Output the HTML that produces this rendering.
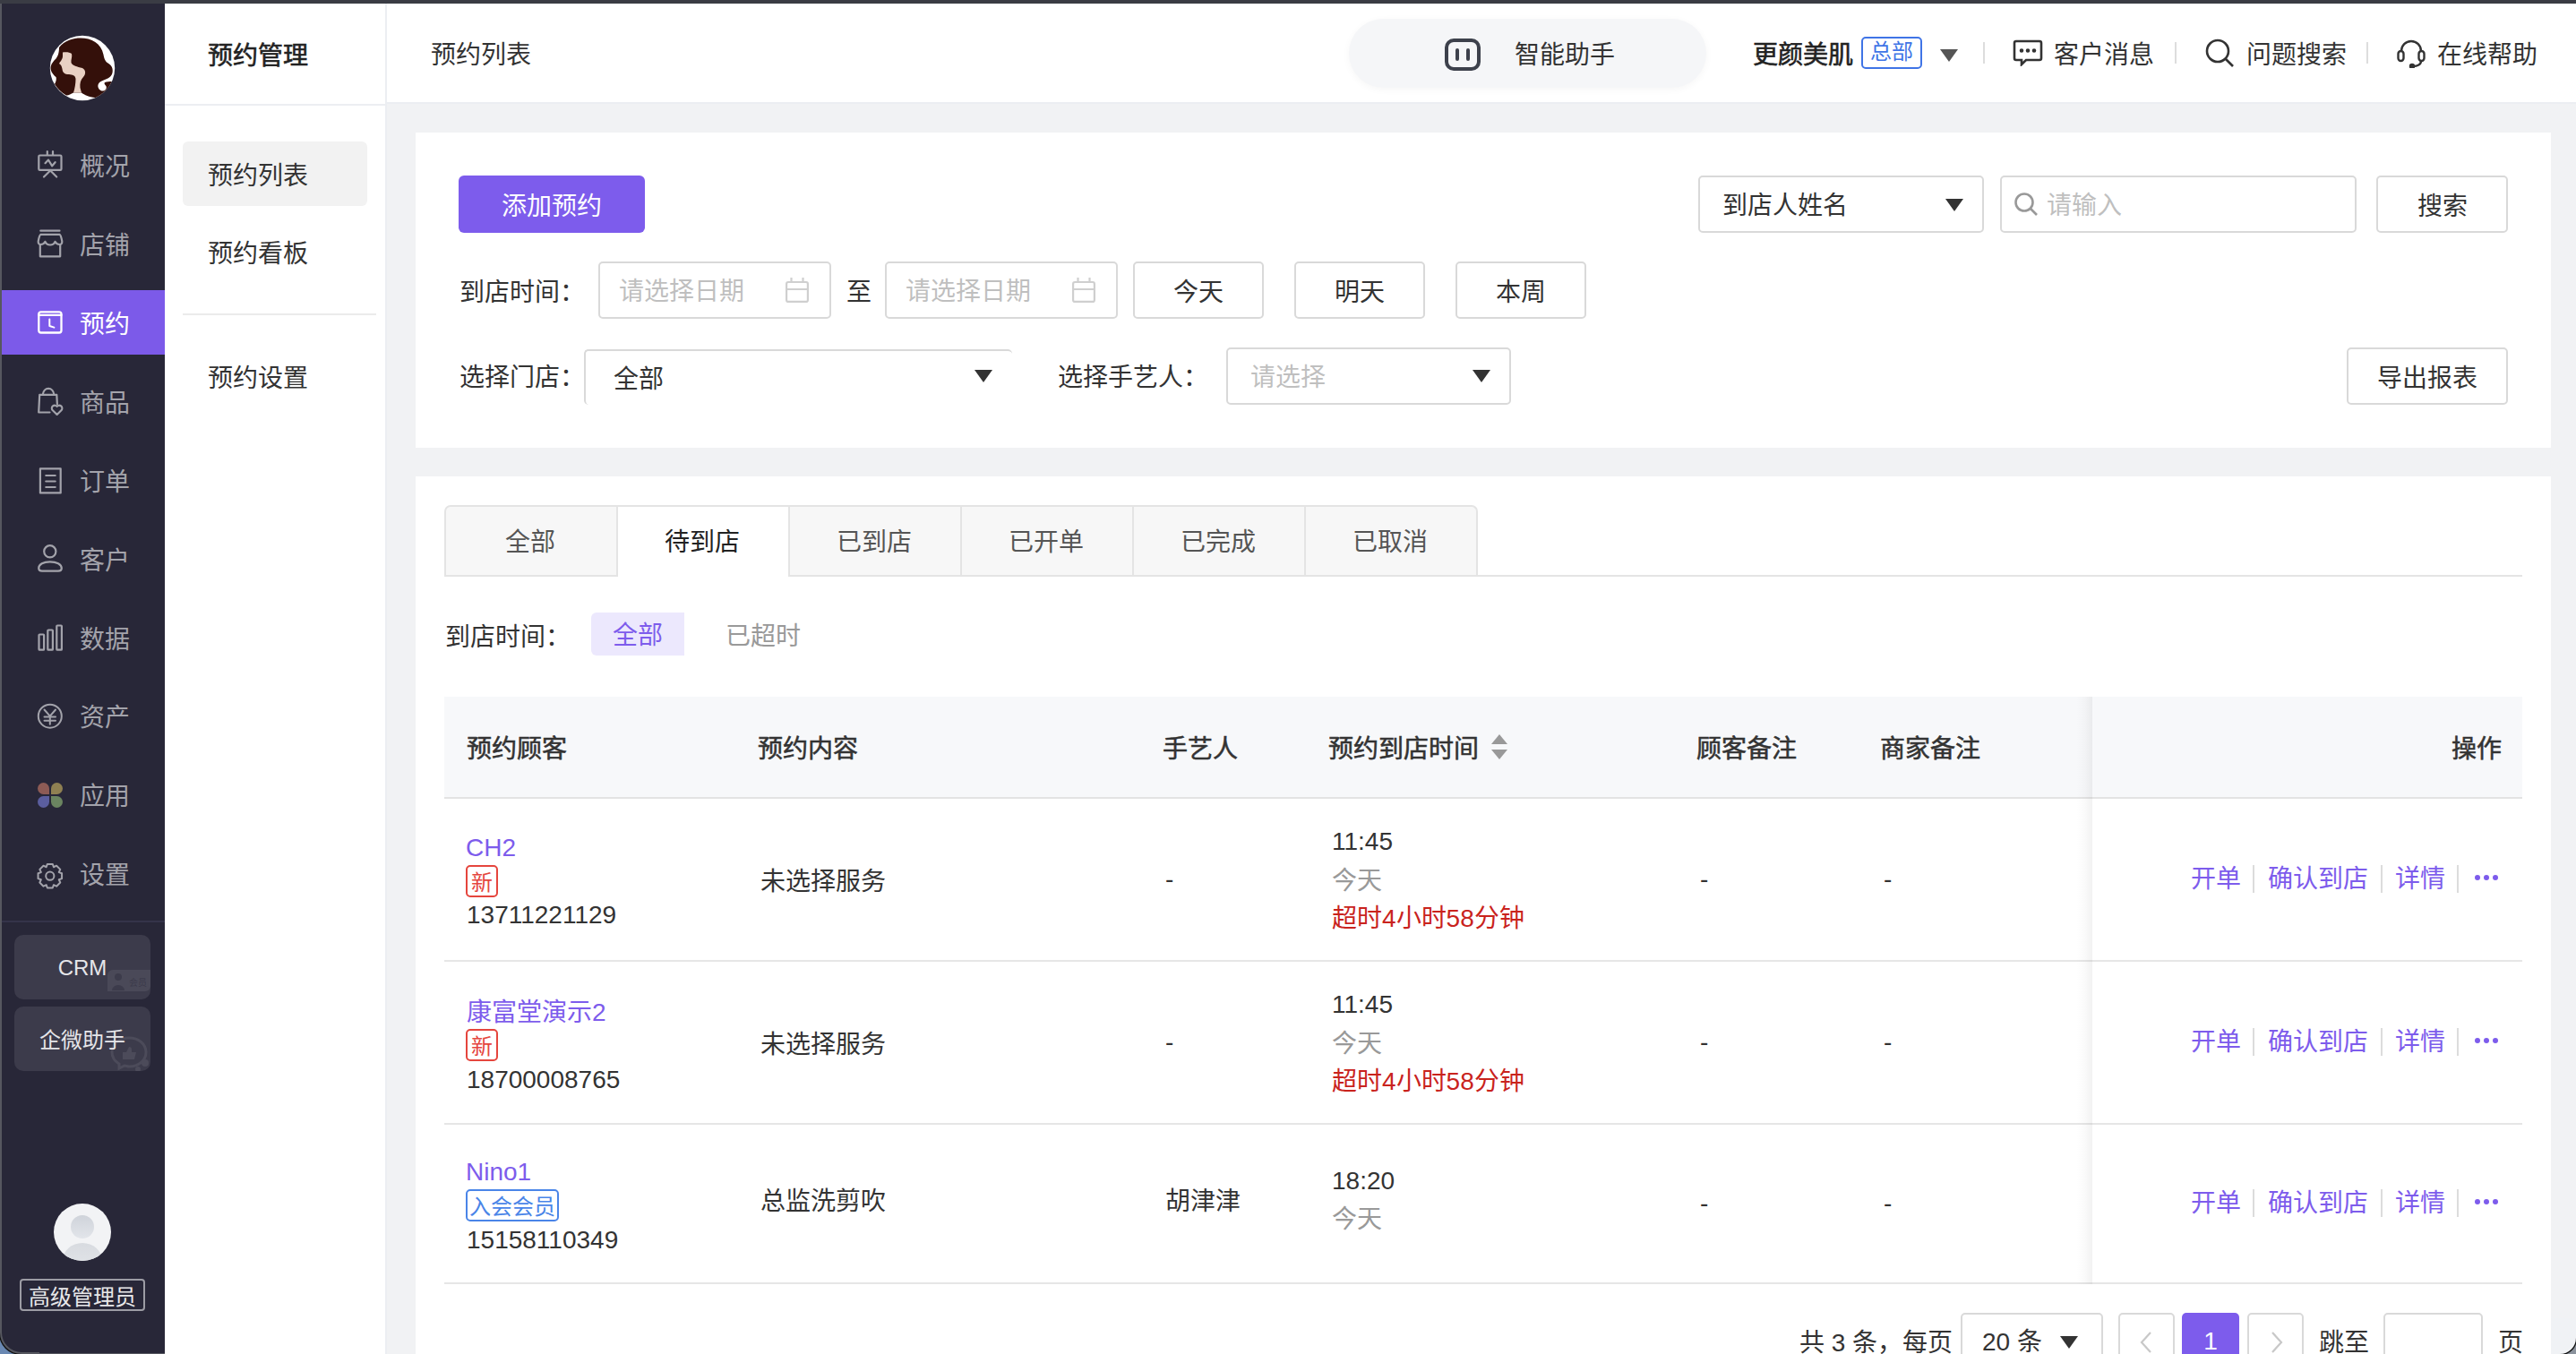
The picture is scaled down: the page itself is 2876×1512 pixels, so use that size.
<!DOCTYPE html>
<html lang="zh-CN"><head><meta charset="utf-8">
<style>
*{box-sizing:border-box;margin:0;padding:0}
html,body{-webkit-font-smoothing:antialiased;width:2876px;height:1512px;overflow:hidden;background:#f1f2f4;font-family:"Liberation Sans",sans-serif;color:#333}
.a{position:absolute}
.t{position:absolute;white-space:nowrap;font-size:28px;line-height:40px}
.topbar{left:0;top:0;width:2876px;height:4px;background:#3a3c44}
.lborder{left:0;top:4px;width:2px;height:1508px;background:#56575f}
.side{left:2px;top:4px;width:182px;height:1508px;background:#282738}
.sub{left:184px;top:4px;width:246px;height:1508px;background:#fff}
.subline{left:430px;top:4px;width:2px;height:1508px;background:#eceef2}
.hdr{left:432px;top:4px;width:2444px;height:112px;background:#fff;border-bottom:2px solid #eceef2}
.card{background:#fff}
.btn{position:absolute;border:2px solid #d9d9d9;border-radius:5px;background:#fff;font-size:28px;text-align:center;color:#333}
.inp{position:absolute;border:2px solid #d9d9d9;border-radius:5px;background:#fff}
.ph{color:#bfbfbf}
.tri{position:absolute;width:0;height:0;border-left:10px solid transparent;border-right:10px solid transparent;border-top:14px solid #333}
.menu .t{color:#a3a3ab;font-size:28px}
.sideic{position:absolute;left:39px;width:30px;height:30px}
.name{color:#7d5cec}
.name.lat{font-size:28px}
.tagn{width:36px;height:36px;border:2px solid #e5453d;border-radius:5px;color:#e5453d;font-size:24px;line-height:35px;text-align:center}
.tagm{width:104px;height:36px;border:2px solid #4a85e8;border-radius:5px;color:#4a85e8;font-size:24px;line-height:35px;text-align:center}
.num{font-size:28px}
.th{color:#333;-webkit-text-stroke:0.55px #333}
.med{-webkit-text-stroke:0.6px currentColor}
</style></head><body>
<div class="a topbar"></div>
<div class="a lborder"></div>
<div class="a side menu">
<svg class="a" style="left:50px;top:32px" width="80" height="80" viewBox="0 0 80 80"><defs><clipPath id="lc"><circle cx="40" cy="40" r="36.2"/></clipPath></defs>
<circle cx="40" cy="40" r="36.2" fill="#fff"/>
<g clip-path="url(#lc)">
<path fill="#34100a" d="M14 17C20 9 30 6.5 38 6.5C50 6.5 61 12 63.5 25C64.5 31 66 33 70 35.5C75 39 75 47 70 50.5C66 53 60 54 58 57.5C56 61 59 65.5 63 65.5C66 65.5 68 62 66 59.5C65 58.5 64 57 65 56C67 55 70 55 73 55L80 55L80 66C70 70 60 74 54 73C48 72.5 42 70 39 67.5L30 67.5C27 69 24 71 22 70.5C16 67 12 63 9 58C11 55 11 51 10.5 50C8 48 4.5 44 4.5 40C4.5 36 8 32 10 30C12 28 14 24 14 17Z"/>
<path fill="#e8d0c3" d="M18 22.5C21 22 26 22 28 24C29 27 27 31 27.5 34C29 37.5 34 38.5 40 40C44 42 44 47 41 50C38 53 37 57 37.5 62L39 67.5L30 67.5C31.5 63 32.5 57 32.5 52C32 48 29 47.5 25 47C20 47 18 45 17.5 41C17 38 16 36 14 35C15 33 18 30 18 27Z"/>
</g></svg>
<div class="a" style="left:0;top:320px;width:182px;height:72px;background:#7c5ae9"></div>
<svg class="a" style="left:38px;top:162px" width="34" height="34" viewBox="0 0 34 34" fill="none" stroke="#a3a3ab" stroke-width="2.2" stroke-linecap="round" stroke-linejoin="round"><rect x="3.3" y="7.5" width="25.2" height="16.4" rx="1.2"/><path d="M12.8 3v4M19 3v4"/><path d="M10.5 16.2L14 12.6L18.2 19.3L21.6 15.2"/><path d="M15.1 25.5L9 31.5M17.2 25.5L23.2 31.5"/></svg>
<svg class="a" style="left:38px;top:250px" width="34" height="34" viewBox="0 0 34 34" fill="none" stroke="#a3a3ab" stroke-width="2.2" stroke-linecap="round" stroke-linejoin="round"><path d="M5.3 3.7H26.5"/><path d="M5.5 7.8H26.5Q28 8.5 29.3 15.5Q29.5 19 26.5 19Q23 19 21.5 15.8Q20 19.5 16 19.5Q12 19.5 10.5 15.8Q9 19 5.5 19Q2.5 19 2.7 15.5Q4 8.5 5.5 7.8Z"/><path d="M4.8 19.2V32.3H27.2V19.2"/></svg>
<svg class="a" style="left:38px;top:338px" width="34" height="34" viewBox="0 0 34 34" fill="none" stroke="#fff" stroke-width="2.3" stroke-linecap="round" stroke-linejoin="round"><rect x="3.3" y="6.3" width="25.2" height="23.2" rx="2.5"/><path d="M3.3 9.8H28.5"/><path d="M15.3 14.5V22L20.4 23.6" stroke-width="2"/></svg>
<svg class="a" style="left:38px;top:426px" width="34" height="34" viewBox="0 0 34 34" fill="none" stroke="#a3a3ab" stroke-width="2.2" stroke-linecap="round" stroke-linejoin="round"><path d="M7.8 10.5A6.3 7.5 0 0 1 20.3 10.5"/><path d="M15.5 30.5H3.2L4.2 10.8H23.3L23.9 21.5"/><path d="M23.6 33L18.6 28A2.9 2.9 0 0 1 23.6 23.9A2.9 2.9 0 0 1 28.6 28Z"/></svg>
<svg class="a" style="left:38px;top:514px" width="34" height="34" viewBox="0 0 34 34" fill="none" stroke="#a3a3ab" stroke-width="2.2" stroke-linecap="round" stroke-linejoin="round"><rect x="4.9" y="5.4" width="22.8" height="27"/><path d="M11.3 13H21.7M11.3 19.5H21.7M11.3 26H21.7"/></svg>
<svg class="a" style="left:38px;top:600px" width="34" height="36" viewBox="0 0 34 36" fill="none" stroke="#a3a3ab" stroke-width="2.2" stroke-linecap="round" stroke-linejoin="round"><circle cx="15.8" cy="11.8" r="6.6"/><path d="M3.2 30.5C3.2 26 8.5 23.3 15.8 23.3S28.8 26 28.8 30.5C28.8 33 27 33.6 25 33.6H7C5 33.6 3.2 33 3.2 30.5Z"/></svg>
<svg class="a" style="left:38px;top:690px" width="34" height="34" viewBox="0 0 34 34" fill="none" stroke="#a3a3ab" stroke-width="2.2" stroke-linecap="round" stroke-linejoin="round"><rect x="3.5" y="14.5" width="5.6" height="17.2" rx="0.8"/><rect x="13.3" y="9.5" width="5.6" height="22.2" rx="0.8"/><rect x="23.3" y="4.5" width="5.6" height="27.2" rx="0.8"/></svg>
<svg class="a" style="left:38px;top:780px" width="34" height="34" viewBox="0 0 34 34" fill="none" stroke="#a3a3ab" stroke-width="2" stroke-linecap="round" stroke-linejoin="round"><circle cx="15.8" cy="15.7" r="13"/><path d="M9.5 8.5L15.8 15.6L22 8.5M9.5 16.6H22M9.5 20.8H22M15.8 15.6V24.8"/></svg>
<div class="a" style="left:40px;top:870px;width:13px;height:13px;border-radius:50% 50% 0 50%;background:#8d5b55"></div>
<div class="a" style="left:55px;top:870px;width:13px;height:13px;border-radius:50% 50% 50% 0;background:#8f8052"></div>
<div class="a" style="left:40px;top:885px;width:13px;height:13px;border-radius:50% 0 50% 50%;background:#5b5e9e"></div>
<div class="a" style="left:55px;top:885px;width:13px;height:13px;border-radius:0 50% 50% 50%;background:#6b8561"></div>
<svg class="a" style="left:38px;top:958px" width="34" height="34" viewBox="0 0 34 34" fill="none" stroke="#a3a3ab" stroke-width="2" stroke-linecap="round" stroke-linejoin="round"><path d="M29.07 13.23 L29.07 19.17 L25.79 20.31 L25.77 20.36 L27.28 23.49 L23.09 27.68 L19.96 26.17 L19.91 26.19 L18.77 29.47 L12.83 29.47 L11.69 26.19 L11.64 26.17 L8.51 27.68 L4.32 23.49 L5.83 20.36 L5.81 20.31 L2.53 19.17 L2.53 13.23 L5.81 12.09 L5.83 12.04 L4.32 8.91 L8.51 4.72 L11.64 6.23 L11.69 6.21 L12.83 2.93 L18.77 2.93 L19.91 6.21 L19.96 6.23 L23.09 4.72 L27.28 8.91 L25.77 12.04 L25.79 12.09Z"/><circle cx="15.8" cy="16.2" r="4.6"/></svg>
<div class="t" style="left:87px;top:163px">概况</div>
<div class="t" style="left:87px;top:251px">店铺</div>
<div class="t" style="left:87px;top:339px;color:#fff">预约</div>
<div class="t" style="left:87px;top:427px">商品</div>
<div class="t" style="left:87px;top:515px">订单</div>
<div class="t" style="left:87px;top:603px">客户</div>
<div class="t" style="left:87px;top:691px">数据</div>
<div class="t" style="left:87px;top:778px">资产</div>
<div class="t" style="left:87px;top:866px">应用</div>
<div class="t" style="left:87px;top:954px">设置</div>
<div class="a" style="left:0;top:1024px;width:182px;height:2px;background:#34334a"></div>
<div class="a" style="left:14px;top:1040px;width:152px;height:72px;border-radius:10px;background:#3c3b4b;overflow:hidden">
<div class="a" style="left:104px;top:39px;width:48px;height:24px;background:#4a4958;border-radius:6px 0 6px 0"></div>
<svg class="a" style="left:108px;top:42px" width="44" height="20" viewBox="0 0 44 20"><circle cx="8" cy="5" r="4" fill="#3c3b4b"/><path d="M1 20a7 6 0 0 1 14 0z" fill="#3c3b4b"/><text x="20" y="15" font-size="10" fill="#3c3b4b" font-family="Liberation Sans">会员</text></svg>
<div class="t" style="left:0;width:152px;top:17px;text-align:center;color:#e6e6e9;font-size:24px">CRM</div>
</div>
<div class="a" style="left:14px;top:1120px;width:152px;height:72px;border-radius:10px;background:#3c3b4b;overflow:hidden">
<svg class="a" style="left:106px;top:33px" width="50" height="40" viewBox="0 0 50 40" fill="none" stroke="#4c4b5a" stroke-width="3"><path d="M22 2C11 2 3 9 3 18c0 5 3 10 8 13v5l6-3c2 0 3 1 5 1 11 0 19-7 19-16S33 2 22 2z"/><path d="M15 26V18h4l3-6c2 0 3 1 3 3v3h5l-2 8z" fill="#4c4b5a" stroke="none"/><circle cx="40" cy="30" r="4" fill="#4c4b5a" stroke="none"/><circle cx="32" cy="37" r="3" fill="#4c4b5a" stroke="none"/><circle cx="47" cy="36" r="3" fill="#4c4b5a" stroke="none"/></svg>
<div class="t" style="left:0;width:152px;top:18px;text-align:center;color:#e6e6e9;font-size:24px">企微助手</div>
</div>
<div class="a" style="left:58px;top:1340px;width:64px;height:64px;border-radius:50%;background:#f2f3f5;overflow:hidden">
<div class="a" style="left:19px;top:13px;width:26px;height:26px;border-radius:50%;background:linear-gradient(#cfd3da,#e2e5ea)"></div>
<div class="a" style="left:10px;top:44px;width:44px;height:40px;border-radius:50%;background:linear-gradient(#d8dbe0,#e6e8ec)"></div>
</div>
<div class="a" style="left:20px;top:1424px;width:140px;height:36px;border:2px solid #9c9ca4;border-radius:4px"></div>
<div class="t" style="left:20px;width:140px;top:1425px;text-align:center;color:#e8e8ea;font-size:24px">高级管理员</div>
</div>
<div class="a sub">
<div class="a" style="left:0;top:112px;width:246px;height:2px;background:#eceef2"></div>
<div class="t med" style="left:48px;top:39px;color:#222">预约管理</div>
<div class="a" style="left:20px;top:154px;width:206px;height:72px;border-radius:6px;background:#f2f2f2"></div>
<div class="t" style="left:48px;top:173px;color:#333">预约列表</div>
<div class="t" style="left:48px;top:260px;color:#333">预约看板</div>
<div class="a" style="left:20px;top:346px;width:216px;height:2px;background:#ebebeb"></div>
<div class="t" style="left:48px;top:399px;color:#333">预约设置</div>
</div>
<div class="a subline"></div>
<div class="a hdr">
<div class="t" style="left:49px;top:38px;color:#333">预约列表</div>
<div class="a" style="left:1074px;top:17px;width:399px;height:77px;border-radius:39px;background:#f5f6f8;box-shadow:0 2px 8px rgba(0,0,0,0.04)"></div>
<svg class="a" style="left:1181px;top:39px" width="40" height="36" viewBox="0 0 40 36" fill="none" stroke="#3d414c" stroke-width="4"><rect x="2" y="2" width="36" height="32" rx="8"/><path d="M14 13v10M26 13v10" stroke-linecap="round"/></svg>
<div class="t" style="left:1259px;top:38px;color:#333">智能助手</div>
<div class="t med" style="left:1525px;top:38px;color:#222">更颜美肌</div>
<div class="a" style="left:1646px;top:37px;width:68px;height:36px;border:2px solid #3f74e6;border-radius:5px"></div>
<div class="t" style="left:1646px;width:68px;top:34px;text-align:center;color:#3f74e6;font-size:24px">总部</div>
<div class="tri" style="left:1734px;top:51px;border-top-color:#555"></div>
<div class="a" style="left:1782px;top:43px;width:2px;height:24px;background:#ddd"></div>
<svg class="a" style="left:1815px;top:40px" width="34" height="30" viewBox="0 0 34 30" fill="none" stroke="#333" stroke-width="2.6"><path d="M4 2h26a2 2 0 0 1 2 2v17a2 2 0 0 1-2 2H15l-5 5v-5H4a2 2 0 0 1-2-2V4a2 2 0 0 1 2-2z"/><circle cx="10" cy="12.5" r="1" fill="#333"/><circle cx="17" cy="12.5" r="1" fill="#333"/><circle cx="24" cy="12.5" r="1" fill="#333"/></svg>
<div class="t" style="left:1861px;top:38px;color:#333">客户消息</div>
<div class="a" style="left:1996px;top:43px;width:2px;height:24px;background:#ddd"></div>
<svg class="a" style="left:2030px;top:39px" width="34" height="34" viewBox="0 0 34 34" fill="none" stroke="#333" stroke-width="2.6"><circle cx="14" cy="14" r="12"/><path d="M23 23l8 8"/></svg>
<div class="t" style="left:2076px;top:38px;color:#333">问题搜索</div>
<div class="a" style="left:2210px;top:43px;width:2px;height:24px;background:#ddd"></div>
<svg class="a" style="left:2244px;top:38px" width="32" height="34" viewBox="0 0 32 34" fill="none" stroke="#333" stroke-width="2.4"><path d="M5 15a11 11 0 0 1 22 0"/><rect x="1.5" y="15" width="6" height="11" rx="3"/><rect x="24.5" y="15" width="6" height="11" rx="3"/><path d="M27 26c0 4-4 6-9 6"/><circle cx="17" cy="32" r="2" fill="#333"/></svg>
<div class="t" style="left:2289px;top:38px;color:#333">在线帮助</div>
</div>
<div class="a card" style="left:464px;top:148px;width:2384px;height:352px">
<div class="a" style="left:48px;top:48px;width:208px;height:64px;border-radius:6px;background:#7d5cec"></div>
<div class="t" style="left:48px;width:208px;top:63px;text-align:center;color:#fff">添加预约</div>
<div class="t" style="left:49px;top:159px">到店时间：</div>
<div class="inp" style="left:204px;top:144px;width:260px;height:64px"><div class="t ph" style="left:21px;top:12px">请选择日期</div><svg class="a" style="left:207px;top:16px" width="26" height="28" viewBox="0 0 26 28" fill="none" stroke="#cfcfcf" stroke-width="2.2"><rect x="1.1" y="5" width="23.8" height="21.9" rx="2"/><path d="M1 13h24M6.5 0v6M19.5 0v6"/></svg></div>
<div class="t" style="left:481px;top:159px">至</div>
<div class="inp" style="left:524px;top:144px;width:260px;height:64px"><div class="t ph" style="left:21px;top:12px">请选择日期</div><svg class="a" style="left:207px;top:16px" width="26" height="28" viewBox="0 0 26 28" fill="none" stroke="#cfcfcf" stroke-width="2.2"><rect x="1.1" y="5" width="23.8" height="21.9" rx="2"/><path d="M1 13h24M6.5 0v6M19.5 0v6"/></svg></div>
<div class="btn" style="left:801px;top:144px;width:146px;height:64px;line-height:65px">今天</div>
<div class="btn" style="left:981px;top:144px;width:146px;height:64px;line-height:65px">明天</div>
<div class="btn" style="left:1161px;top:144px;width:146px;height:64px;line-height:65px">本周</div>
<div class="t" style="left:49px;top:254px">选择门店：</div>
<div class="a" style="left:188px;top:242px;width:478px;height:62px;border-top:2px solid #d9d9d9;border-left:2px solid #d9d9d9;border-radius:5px 5px 0 5px"></div>
<div class="t" style="left:221px;top:256px">全部</div>
<div class="tri" style="left:624px;top:265px"></div>
<div class="t" style="left:717px;top:254px">选择手艺人：</div>
<div class="inp" style="left:905px;top:240px;width:318px;height:64px"><div class="t ph" style="left:25px;top:12px">请选择</div><div class="tri" style="left:273px;top:23px"></div></div>
<div class="inp" style="left:1432px;top:48px;width:319px;height:64px"><div class="t" style="left:25px;top:12px">到店人姓名</div><div class="tri" style="left:274px;top:24px"></div></div>
<div class="inp" style="left:1769px;top:48px;width:398px;height:64px">
<svg class="a" style="left:13px;top:16px" width="28" height="28" viewBox="0 0 28 28" fill="none" stroke="#999" stroke-width="2.6"><circle cx="12" cy="12" r="9.5"/><path d="M19 19l7 7"/></svg>
<div class="t ph" style="left:50px;top:12px">请输入</div></div>
<div class="btn" style="left:2189px;top:48px;width:147px;height:64px;line-height:65px">搜索</div>
<div class="btn" style="left:2156px;top:240px;width:180px;height:64px;line-height:66px">导出报表</div>
</div>
</div>
<div class="a card" style="left:464px;top:532px;width:2384px;height:1000px;overflow:hidden">
<div class="a" style="left:32px;top:32px;width:194px;height:80px;background:#f7f7f7;border-top:2px solid #e4e4e4;border-right:2px solid #e4e4e4;border-left:2px solid #e4e4e4;border-top-left-radius:7px;"></div><div class="t" style="left:32px;width:192px;top:54px;text-align:center;color:#555">全部</div><div class="a" style="left:226px;top:32px;width:192px;height:80px;background:#fff;border-top:2px solid #e4e4e4;border-right:2px solid #e4e4e4;"></div><div class="t" style="left:224px;width:192px;top:54px;text-align:center;color:#222">待到店</div><div class="a" style="left:418px;top:32px;width:192px;height:80px;background:#f7f7f7;border-top:2px solid #e4e4e4;border-right:2px solid #e4e4e4;"></div><div class="t" style="left:416px;width:192px;top:54px;text-align:center;color:#555">已到店</div><div class="a" style="left:610px;top:32px;width:192px;height:80px;background:#f7f7f7;border-top:2px solid #e4e4e4;border-right:2px solid #e4e4e4;"></div><div class="t" style="left:608px;width:192px;top:54px;text-align:center;color:#555">已开单</div><div class="a" style="left:802px;top:32px;width:192px;height:80px;background:#f7f7f7;border-top:2px solid #e4e4e4;border-right:2px solid #e4e4e4;"></div><div class="t" style="left:800px;width:192px;top:54px;text-align:center;color:#555">已完成</div><div class="a" style="left:994px;top:32px;width:192px;height:80px;background:#f7f7f7;border-top:2px solid #e4e4e4;border-right:2px solid #e4e4e4;border-top-right-radius:7px;"></div><div class="t" style="left:992px;width:192px;top:54px;text-align:center;color:#555">已取消</div>
<div class="a" style="left:418px;top:110px;width:1934px;height:2px;background:#e4e4e4"></div>
<div class="a" style="left:32px;top:110px;width:194px;height:2px;background:#e4e4e4"></div>
<div class="t" style="left:33px;top:160px">到店时间：</div>
<div class="a" style="left:196px;top:152px;width:104px;height:48px;border-radius:6px 0 0 6px;background:#ece8fd"></div>
<div class="t" style="left:196px;width:104px;top:158px;text-align:center;color:#7d5cec">全部</div>
<div class="t" style="left:346px;top:159px;color:#999">已超时</div>
<div class="a" style="left:32px;top:246px;width:2320px;height:114px;background:#f7f8fa;border-bottom:2px solid #e3e3e3"></div>
<div class="t th" style="left:57px;top:285px">预约顾客</div>
<div class="t th" style="left:382px;top:285px">预约内容</div>
<div class="t th" style="left:834px;top:285px">手艺人</div>
<div class="t th" style="left:1019px;top:285px">预约到店时间</div>
<svg class="a" style="left:1200px;top:288px" width="20" height="28" viewBox="0 0 20 28" fill="#999"><path d="M10 0L19 11H1z"/><path d="M10 28L19 17H1z"/></svg>
<div class="t th" style="left:1430px;top:285px">顾客备注</div>
<div class="t th" style="left:1635px;top:285px">商家备注</div>
<div class="t th" style="left:2273px;top:285px">操作</div>
<div class="a" style="left:32px;top:540px;width:2320px;height:2px;background:#e6e6e6"></div>
<div class="a" style="left:32px;top:722px;width:2320px;height:2px;background:#e6e6e6"></div>
<div class="a" style="left:32px;top:900px;width:2320px;height:2px;background:#e6e6e6"></div>
<div class="a" style="left:1854px;top:246px;width:18px;height:656px;background:linear-gradient(to left,rgba(0,0,0,0.055),rgba(0,0,0,0.02) 45%,rgba(0,0,0,0))"></div>
<div class="t name lat" style="left:56px;top:395px">CH2</div><div class="a tagn" style="left:56px;top:434px">新</div><div class="t num" style="left:57px;top:470px">13711221129</div><div class="t" style="left:385px;top:433px">未选择服务</div><div class="t" style="left:837px;top:430px">-</div><div class="t num" style="left:1023px;top:388px">11:45</div><div class="t" style="left:1023px;top:432px;color:#999">今天</div><div class="t" style="left:1023px;top:474px;color:#c9231d">超时4小时58分钟</div><div class="t" style="left:1434px;top:430px">-</div><div class="t" style="left:1639px;top:430px">-</div><div class="t" style="left:1982px;top:430px;color:#7d5cec">开单</div><div class="a" style="left:2051px;top:434px;width:2px;height:31px;background:#dcdcdc"></div><div class="t" style="left:2068px;top:430px;color:#7d5cec">确认到店</div><div class="a" style="left:2194px;top:434px;width:2px;height:31px;background:#dcdcdc"></div><div class="t" style="left:2210px;top:430px;color:#7d5cec">详情</div><div class="a" style="left:2279px;top:434px;width:2px;height:31px;background:#dcdcdc"></div><div class="a" style="left:2299px;top:445px;width:6px;height:6px;border-radius:50%;background:#7d5cec"></div><div class="a" style="left:2309px;top:445px;width:6px;height:6px;border-radius:50%;background:#7d5cec"></div><div class="a" style="left:2319px;top:445px;width:6px;height:6px;border-radius:50%;background:#7d5cec"></div>
<div class="t name" style="left:57px;top:579px">康富堂演示2</div><div class="a tagn" style="left:56px;top:617px">新</div><div class="t num" style="left:57px;top:654px">18700008765</div><div class="t" style="left:385px;top:615px">未选择服务</div><div class="t" style="left:837px;top:612px">-</div><div class="t num" style="left:1023px;top:570px">11:45</div><div class="t" style="left:1023px;top:614px;color:#999">今天</div><div class="t" style="left:1023px;top:656px;color:#c9231d">超时4小时58分钟</div><div class="t" style="left:1434px;top:612px">-</div><div class="t" style="left:1639px;top:612px">-</div><div class="t" style="left:1982px;top:612px;color:#7d5cec">开单</div><div class="a" style="left:2051px;top:616px;width:2px;height:31px;background:#dcdcdc"></div><div class="t" style="left:2068px;top:612px;color:#7d5cec">确认到店</div><div class="a" style="left:2194px;top:616px;width:2px;height:31px;background:#dcdcdc"></div><div class="t" style="left:2210px;top:612px;color:#7d5cec">详情</div><div class="a" style="left:2279px;top:616px;width:2px;height:31px;background:#dcdcdc"></div><div class="a" style="left:2299px;top:627px;width:6px;height:6px;border-radius:50%;background:#7d5cec"></div><div class="a" style="left:2309px;top:627px;width:6px;height:6px;border-radius:50%;background:#7d5cec"></div><div class="a" style="left:2319px;top:627px;width:6px;height:6px;border-radius:50%;background:#7d5cec"></div>
<div class="t name lat" style="left:56px;top:757px">Nino1</div><div class="a tagm" style="left:56px;top:796px">入会会员</div><div class="t num" style="left:57px;top:833px">15158110349</div><div class="t" style="left:385px;top:790px">总监洗剪吹</div><div class="t" style="left:837px;top:790px">胡津津</div><div class="t num" style="left:1023px;top:767px">18:20</div><div class="t" style="left:1023px;top:810px;color:#999">今天</div><div class="t" style="left:1434px;top:792px">-</div><div class="t" style="left:1639px;top:792px">-</div><div class="t" style="left:1982px;top:792px;color:#7d5cec">开单</div><div class="a" style="left:2051px;top:796px;width:2px;height:31px;background:#dcdcdc"></div><div class="t" style="left:2068px;top:792px;color:#7d5cec">确认到店</div><div class="a" style="left:2194px;top:796px;width:2px;height:31px;background:#dcdcdc"></div><div class="t" style="left:2210px;top:792px;color:#7d5cec">详情</div><div class="a" style="left:2279px;top:796px;width:2px;height:31px;background:#dcdcdc"></div><div class="a" style="left:2299px;top:807px;width:6px;height:6px;border-radius:50%;background:#7d5cec"></div><div class="a" style="left:2309px;top:807px;width:6px;height:6px;border-radius:50%;background:#7d5cec"></div><div class="a" style="left:2319px;top:807px;width:6px;height:6px;border-radius:50%;background:#7d5cec"></div>
<div class="t" style="left:1545px;top:948px">共 3 条，每页</div>
<div class="inp" style="left:1725px;top:934px;width:159px;height:64px"><div class="t" style="left:22px;top:11px">20 条</div><div class="tri" style="left:109px;top:24px"></div></div>
<div class="inp" style="left:1901px;top:934px;width:63px;height:64px"><svg class="a" style="left:20px;top:18px" width="18" height="26" viewBox="0 0 18 26" fill="none" stroke="#c8c8c8" stroke-width="2.2"><path d="M14 2L4 13l10 11"/></svg></div>
<div class="a" style="left:1972px;top:934px;width:64px;height:64px;border-radius:5px;background:#7d5cec"></div>
<div class="t num" style="left:1972px;width:64px;top:946px;text-align:center;color:#fff">1</div>
<div class="inp" style="left:2045px;top:934px;width:63px;height:64px"><svg class="a" style="left:22px;top:18px" width="18" height="26" viewBox="0 0 18 26" fill="none" stroke="#c8c8c8" stroke-width="2.2"><path d="M4 2l10 11L4 24"/></svg></div>
<div class="t" style="left:2125px;top:948px">跳至</div>
<div class="inp" style="left:2197px;top:934px;width:111px;height:64px"></div>
<div class="t" style="left:2325px;top:948px">页</div>
</div>
<div class="a" style="left:0;top:1482px;width:30px;height:30px;background:#6a88b2"></div>
<div class="a" style="left:0;top:1472px;width:44px;height:40px;background:#282738;border-left:2px solid #56575f;border-bottom:2px solid #56575f;border-bottom-left-radius:24px;box-shadow:-1px 1px 0 #111"></div>
<div class="a" style="left:2850px;top:1482px;width:26px;height:30px;background:#8b929c"></div>
<div class="a" style="left:2848px;top:1472px;width:28px;height:40px;background:#f0f2f5;border-bottom-right-radius:18px;box-shadow:1px 1px 0 #111"></div>
<div class="a" style="left:40px;top:1511px;width:144px;height:1px;background:#56575f"></div>
</body></html>
